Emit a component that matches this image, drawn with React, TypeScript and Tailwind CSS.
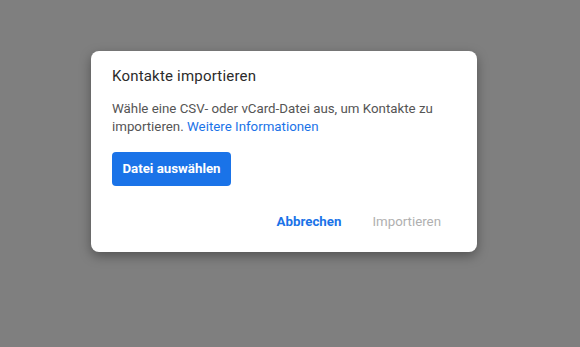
import React from "react";

export default function App() {
  return (
    <div className="w-[580px] h-[347px] bg-[#7f7f7f] relative overflow-hidden" style={{ fontFamily: "Roboto, 'Open Sans', sans-serif" }}>
      <div className="absolute left-[91px] top-[51px] w-[386px] h-[201px] bg-white rounded-[8px] shadow-[0_4px_12px_rgba(0,0,0,0.35)] flex flex-col px-[21px] pt-[15px]">
        <div className="text-[15px] leading-[20px] text-[#2b2b2b] tracking-[0.2px]">
          Kontakte importieren
        </div>
        <div className="mt-[14px] text-[13.3px] leading-[18px] text-[#555555] pr-[20px]">
          Wähle eine CSV- oder vCard-Datei aus, um Kontakte zu importieren.{" "}
          <span className="text-[#1a73e8]">Weitere Informationen</span>
        </div>
        <div className="mt-[16px]">
          <button className="w-[119px] h-[34px] bg-[#1a73e8] text-white rounded-[4px] text-[13.3px] font-bold flex items-center justify-center">
            Datei auswählen
          </button>
        </div>
        <div className="mt-[26px] flex justify-end items-center gap-[31px] pr-[15px] text-[13.3px]">
          <span className="text-[#1a73e8] font-bold">Abbrechen</span>
          <span className="text-[#b0b0b0]">Importieren</span>
        </div>
      </div>
    </div>
  );
}
